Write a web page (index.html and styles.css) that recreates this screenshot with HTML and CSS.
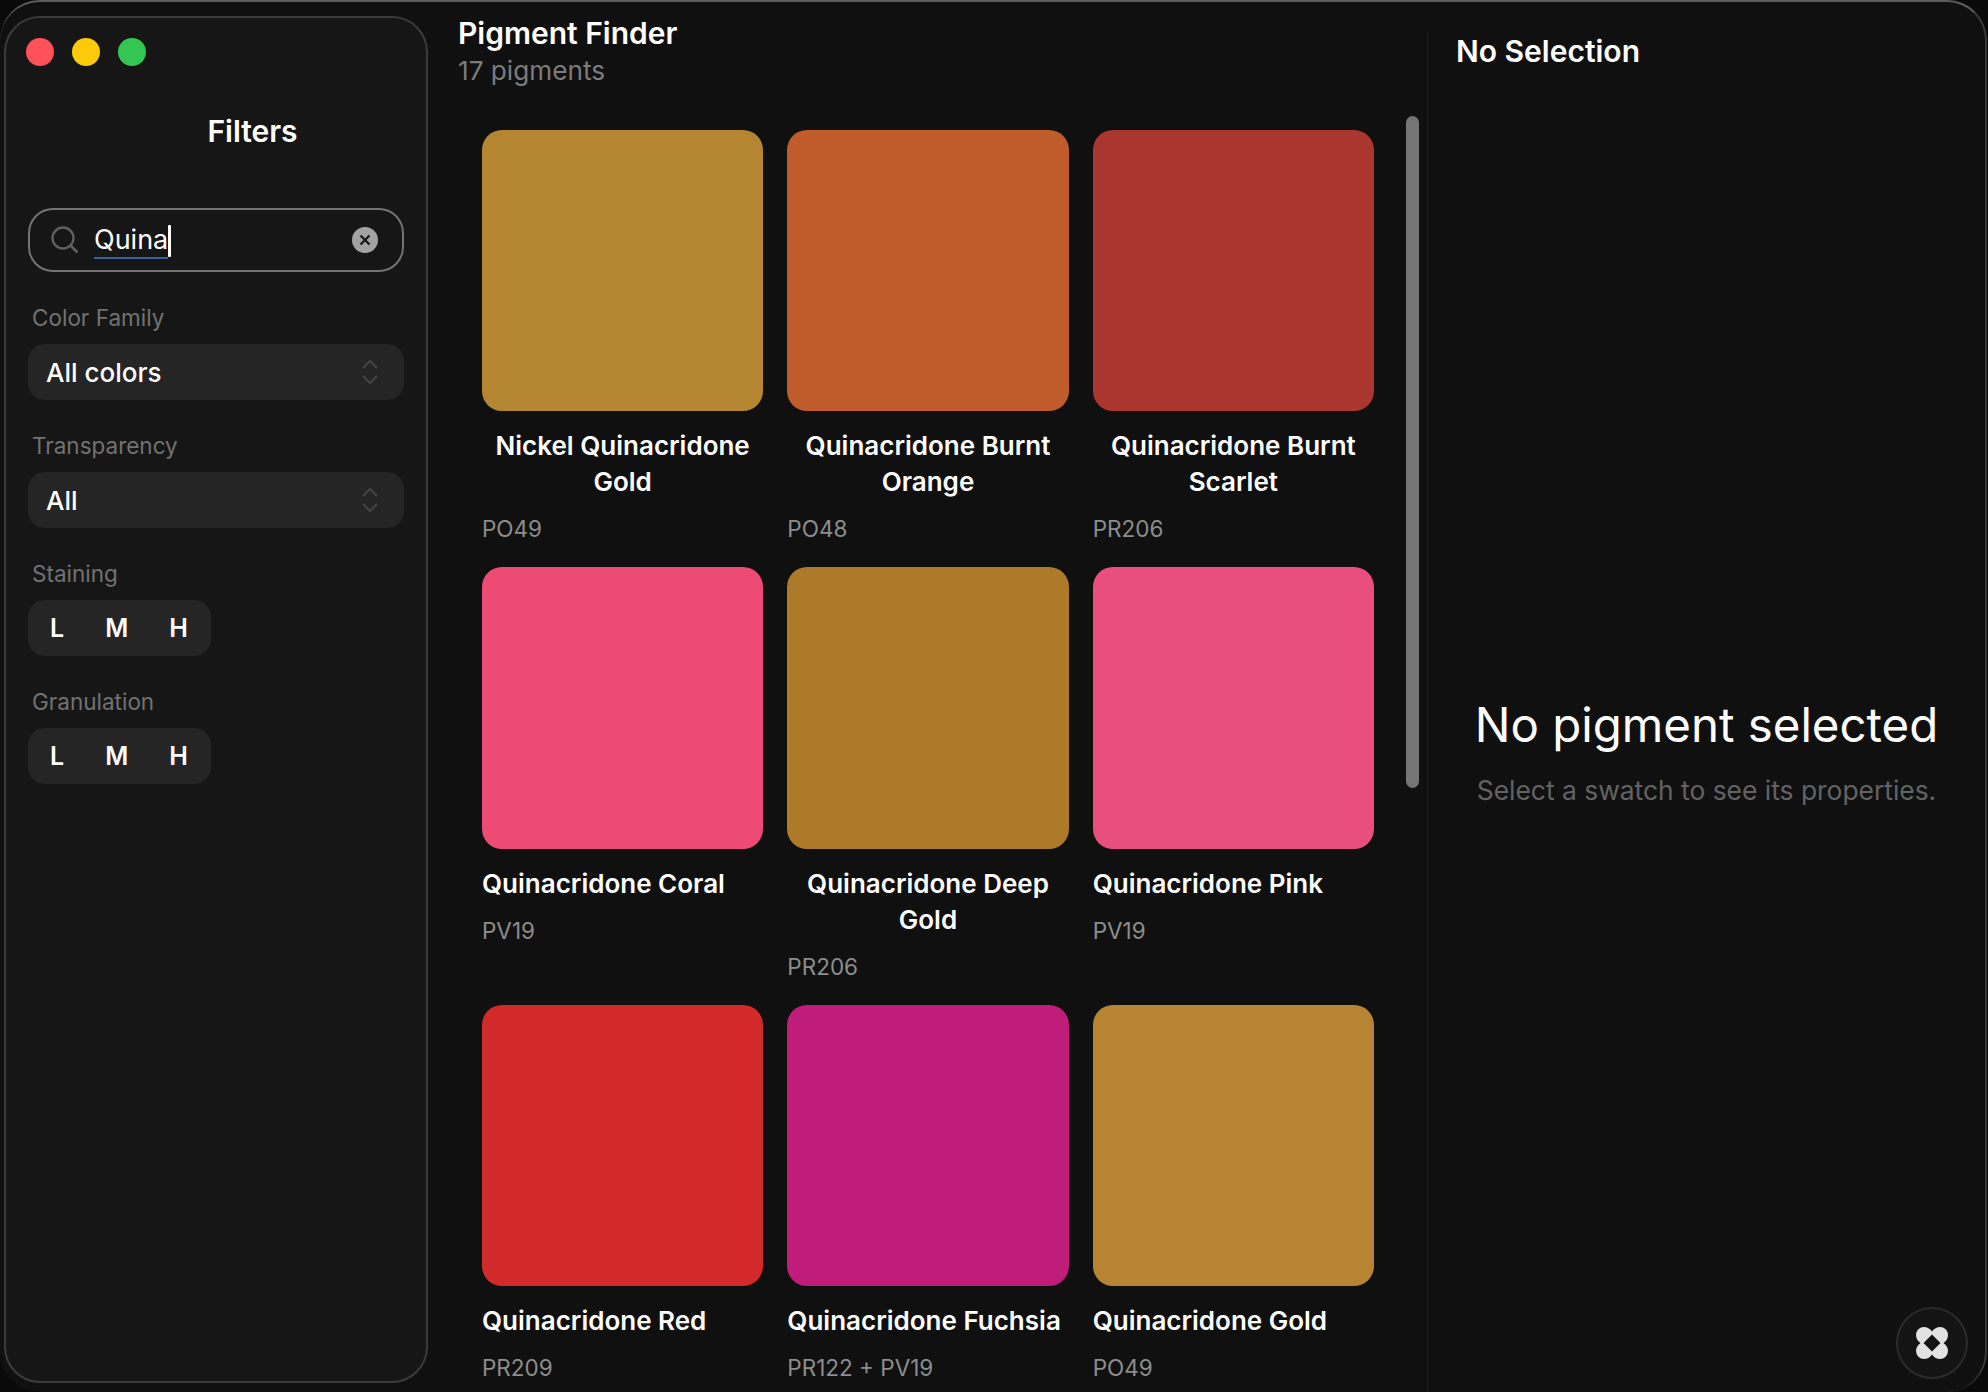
FILE: index.html
```html
<!DOCTYPE html>
<html lang="en">
<head>
<meta charset="utf-8">
<title>Pigment Finder</title>
<link rel="stylesheet" href="styles.css">
</head>
<body>
<div class="window">
  <aside class="sidebar">
    <div class="traffic">
      <span class="light red"></span><span class="light yellow"></span><span class="light green"></span>
    </div>
    <h2 class="filters-title">Filters</h2>
    <div class="search">
      <svg class="search-icon" viewBox="0 0 28 28" width="28" height="28"><circle cx="12" cy="12" r="10.5" fill="none" stroke="#5f5f5f" stroke-width="2.4"/><path d="M19.5 19.5L26.5 26.5" stroke="#5f5f5f" stroke-width="2.6" fill="none"/></svg>
      <span class="search-text"><span class="composing">Quina</span><span class="caret"></span></span>
      <svg class="clear-icon" viewBox="0 0 26 26" width="26" height="26"><circle cx="13" cy="13" r="13" fill="#a2a2a2"/><path d="M8.5 8.5L17.5 17.5M17.5 8.5L8.5 17.5" stroke="#161616" stroke-width="2.2" fill="none"/></svg>
    </div>
    <div class="field">
      <div class="label">Color Family</div>
      <div class="select"><span>All colors</span>
        <svg viewBox="0 0 18 26" width="18" height="26"><path d="M2 9L9 2L16 9M2 17L9 24L16 17" stroke="#444444" stroke-width="2" fill="none"/></svg>
      </div>
    </div>
    <div class="field">
      <div class="label">Transparency</div>
      <div class="select"><span>All</span>
        <svg viewBox="0 0 18 26" width="18" height="26"><path d="M2 9L9 2L16 9M2 17L9 24L16 17" stroke="#444444" stroke-width="2" fill="none"/></svg>
      </div>
    </div>
    <div class="field">
      <div class="label">Staining</div>
      <div class="seg"><span>L</span><span>M</span><span>H</span></div>
    </div>
    <div class="field">
      <div class="label">Granulation</div>
      <div class="seg"><span>L</span><span>M</span><span>H</span></div>
    </div>
  </aside>

  <main class="main">
    <header class="main-head">
      <h1 class="app-title">Pigment Finder</h1>
      <div class="count">17 pigments</div>
    </header>
    <div class="grid">
      <article class="card">
        <div class="swatch c-nickel"></div>
        <div class="name wrap">Nickel Quinacridone Gold</div>
        <div class="code">PO49</div>
      </article>
      <article class="card">
        <div class="swatch c-orange"></div>
        <div class="name wrap">Quinacridone Burnt Orange</div>
        <div class="code">PO48</div>
      </article>
      <article class="card">
        <div class="swatch c-scarlet"></div>
        <div class="name wrap">Quinacridone Burnt Scarlet</div>
        <div class="code">PR206</div>
      </article>
      <article class="card">
        <div class="swatch c-coral"></div>
        <div class="name">Quinacridone Coral</div>
        <div class="code">PV19</div>
      </article>
      <article class="card">
        <div class="swatch c-deep"></div>
        <div class="name wrap">Quinacridone Deep Gold</div>
        <div class="code">PR206</div>
      </article>
      <article class="card">
        <div class="swatch c-pink"></div>
        <div class="name">Quinacridone Pink</div>
        <div class="code">PV19</div>
      </article>
      <article class="card">
        <div class="swatch c-red"></div>
        <div class="name">Quinacridone Red</div>
        <div class="code">PR209</div>
      </article>
      <article class="card">
        <div class="swatch c-fuchsia"></div>
        <div class="name">Quinacridone Fuchsia</div>
        <div class="code">PR122 + PV19</div>
      </article>
      <article class="card">
        <div class="swatch c-gold"></div>
        <div class="name">Quinacridone Gold</div>
        <div class="code">PO49</div>
      </article>
    </div>
    <div class="scrollbar"></div>
  </main>

  <section class="detail">
    <h2 class="detail-title">No Selection</h2>
    <div class="empty">
      <div class="empty-title">No pigment selected</div>
      <div class="empty-sub">Select a swatch to see its properties.</div>
    </div>
  </section>

  <button class="fab" type="button" aria-label="Command">
    <svg viewBox="0 0 32 32" width="32" height="32"><path fill="#e2e2e2" fill-rule="evenodd" d="M16 4.5C18 1.5 21 0 24 0A8 8 0 0 1 32 8C32 11 30.5 14 27.5 16C30.5 18 32 21 32 24A8 8 0 0 1 24 32C21 32 18 30.5 16 27.5C14 30.5 11 32 8 32A8 8 0 0 1 0 24C0 21 1.5 18 4.5 16C1.5 14 0 11 0 8A8 8 0 0 1 8 0C11 0 14 1.5 16 4.5ZM16 7.5L24.5 16L16 24.5L7.5 16Z"/></svg>
  </button>
</div>
</body>
</html>
```
FILE: styles.css
```css
* { box-sizing: border-box; }
html, body { margin: 0; height: 100%; background: #0a0a0a; }
body {
  font-family: Inter, "Liberation Sans", sans-serif;
  color: #fff;
  overflow: hidden;
}
h1, h2 { margin: 0; font-weight: 600; }

.window {
  position: relative;
  width: 1987px;
  height: 1392px;
  display: flex;
  background: #101010;
  border-top: 2px solid #5c5c5c;
  border-right: 2px solid #3a3a3a;
  border-radius: 40px;
  overflow: hidden;
}

/* Sidebar */
.sidebar {
  flex: none;
  width: 424px;
  height: 1367px;
  margin: 14px 0 0 4px;
  padding: 0 22px;
  background: #161616;
  border: 2px solid #3b3b3b;
  border-radius: 36px;
}
.traffic { display: flex; gap: 18px; padding-top: 20px; margin-left: -2px; }
.light { width: 28px; height: 28px; border-radius: 50%; }
.red { background: #fe5159; }
.yellow { background: #fdc90b; }
.green { background: #33c653; }
.filters-title {
  margin-top: 43px;
  padding-left: 73px;
  text-align: center;
  font-size: 30px;
  line-height: 44px;
}
.search {
  margin-top: 55px;
  height: 64px;
  display: flex;
  align-items: center;
  padding: 0 24px 0 21px;
  border: 2px solid #737373;
  border-radius: 25px;
}
.search-icon { flex: none; }
.search-text {
  flex: 1;
  margin-left: 15px;
  padding-top: 2px;
  display: flex;
  align-items: center;
  font-size: 27px;
  line-height: 34px;
}
.composing { border-bottom: 2px solid #36639f; }
.caret { width: 3px; height: 32px; background: #fff; border-radius: 1px; }
.clear-icon { flex: none; }

.field { margin-top: 31px; }
.label {
  padding-left: 4px;
  font-size: 22.5px;
  line-height: 30px;
  color: #727272;
}
.select {
  margin-top: 11px;
  height: 56px;
  display: flex;
  align-items: center;
  justify-content: space-between;
  padding: 0 25px 0 18px;
  background: #252525;
  border-radius: 17px;
  font-size: 26px;
  font-weight: 500;
}
.seg {
  margin-top: 11px;
  width: 183px;
  height: 56px;
  display: flex;
  align-items: center;
  gap: 41px;
  padding-left: 22px;
  background: #252525;
  border-radius: 17px;
  font-size: 25px;
  font-weight: 600;
}

/* Main */
.main { position: relative; flex: none; width: 999px; padding-left: 30px; }
.main-head { padding-top: 12px; }
.app-title { font-size: 30px; line-height: 38px; }
.count { font-size: 26.2px; line-height: 38px; color: #7c7c7c; }
.grid {
  margin: 40px 0 0 24px;
  width: 892px;
  display: grid;
  grid-template-columns: repeat(3, 1fr);
  column-gap: 24px;
  row-gap: 24px;
}
.swatch { aspect-ratio: 1; border-radius: 20px; }
.name {
  margin-top: 17px;
  font-size: 26px;
  line-height: 36px;
  font-weight: 600;
}
.wrap { text-align: center; }
.code { margin-top: 15px; font-size: 22.5px; line-height: 28px; color: #8d8d8d; }
.c-nickel { background: #b58632; }
.c-orange { background: #c05c2b; }
.c-scarlet { background: #a93730; }
.c-coral { background: #ee4b74; }
.c-deep { background: #ad7a2a; }
.c-pink { background: #e94e80; }
.c-red { background: #d22a2a; }
.c-fuchsia { background: #c01c7a; }
.c-gold { background: #b68432; }
.scrollbar {
  position: absolute;
  top: 114px;
  left: 978px;
  width: 13px;
  height: 672px;
  border-radius: 7px;
  background: #757575;
}

/* Detail */
.detail {
  flex: 1;
  margin-top: 30px;
  display: flex;
  flex-direction: column;
  border-left: 1px solid #1e1e1e;
}
.detail-title {
  height: 86px;
  padding-left: 28px;
  font-size: 30px;
  line-height: 38px;
}
.empty {
  flex: 1;
  display: flex;
  flex-direction: column;
  align-items: center;
  justify-content: center;
  padding-bottom: 8px;
}
.empty-title { font-size: 47.4px; line-height: 60px; }
.empty-sub { margin-top: 18px; font-size: 26.4px; line-height: 34px; color: #636363; }

.fab {
  position: absolute;
  right: 17px;
  bottom: 13px;
  width: 72px;
  height: 72px;
  display: flex;
  align-items: center;
  justify-content: center;
  padding: 0;
  background: #141414;
  border: 2px solid #2b2b2b;
  border-radius: 50%;
}
```
